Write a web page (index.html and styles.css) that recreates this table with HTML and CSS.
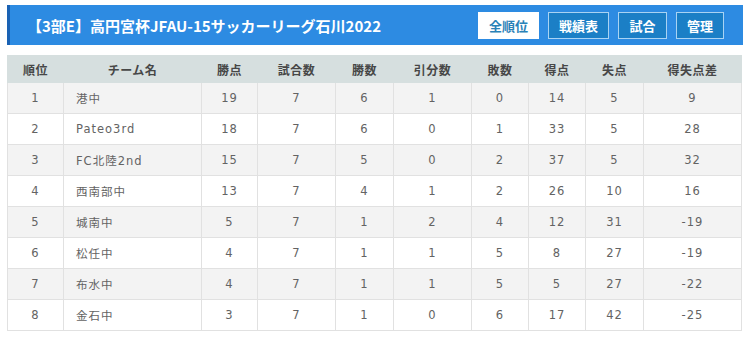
FILE: index.html
```html
<!DOCTYPE html>
<html lang="ja">
<head>
<meta charset="utf-8">
<link rel="stylesheet" href="styles.css">
</head>
<body>
<div class="page">
  <div class="titlebar">
    <h1 class="title">【3部E】高円宮杯JFAU-15サッカーリーグ石川2022</h1>
    <div class="btns">
      <span class="btn active w3">全順位</span>
      <span class="btn w3">戦績表</span>
      <span class="btn w2a">試合</span>
      <span class="btn w2b">管理</span>
    </div>
  </div>
  <table class="standings">
    <colgroup>
      <col style="width:56px"><col style="width:138px"><col style="width:56px"><col style="width:78px"><col style="width:58px"><col style="width:78px"><col style="width:57px"><col style="width:57px"><col style="width:58px"><col style="width:98px">
    </colgroup>
    <thead>
      <tr><th>順位</th><th>チーム名</th><th>勝点</th><th>試合数</th><th>勝数</th><th>引分数</th><th>敗数</th><th>得点</th><th>失点</th><th>得失点差</th></tr>
    </thead>
    <tbody>
      <tr><td>1</td><td class="team">港中</td><td>19</td><td>7</td><td>6</td><td>1</td><td>0</td><td>14</td><td>5</td><td>9</td></tr>
      <tr><td>2</td><td class="team">Pateo3rd</td><td>18</td><td>7</td><td>6</td><td>0</td><td>1</td><td>33</td><td>5</td><td>28</td></tr>
      <tr><td>3</td><td class="team">FC北陸2nd</td><td>15</td><td>7</td><td>5</td><td>0</td><td>2</td><td>37</td><td>5</td><td>32</td></tr>
      <tr><td>4</td><td class="team">西南部中</td><td>13</td><td>7</td><td>4</td><td>1</td><td>2</td><td>26</td><td>10</td><td>16</td></tr>
      <tr><td>5</td><td class="team">城南中</td><td>5</td><td>7</td><td>1</td><td>2</td><td>4</td><td>12</td><td>31</td><td>-19</td></tr>
      <tr><td>6</td><td class="team">松任中</td><td>4</td><td>7</td><td>1</td><td>1</td><td>5</td><td>8</td><td>27</td><td>-19</td></tr>
      <tr><td>7</td><td class="team">布水中</td><td>4</td><td>7</td><td>1</td><td>1</td><td>5</td><td>5</td><td>27</td><td>-22</td></tr>
      <tr><td>8</td><td class="team">金石中</td><td>3</td><td>7</td><td>1</td><td>0</td><td>6</td><td>17</td><td>42</td><td>-25</td></tr>
    </tbody>
  </table>
</div>
</body>
</html>
```
FILE: styles.css
```css
html, body {
  margin: 0;
  padding: 0;
  background: #ffffff;
}
.page {
  padding: 5px 5px 0 7px;
  font-family: "DejaVu Sans", "Noto Sans CJK JP", sans-serif;
}
.titlebar {
  height: 40px;
  box-sizing: border-box;
  background: #2d8be2;
  border-left: 3px solid #1a62b4;
  display: flex;
  align-items: center;
  justify-content: space-between;
  padding: 0 19px 0 17px;
}
.title {
  margin: 0;
  color: #ffffff;
  font-family: "Noto Sans CJK JP", sans-serif;
  font-weight: 700;
  font-size: 15px;
  letter-spacing: 0;
}
.btns {
  display: flex;
  gap: 9px;
  margin-top: 1px;
}
.btn {
  box-sizing: border-box;
  height: 27px;
  padding: 0;
  display: flex;
  align-items: center;
  justify-content: center;
  border: 1px solid #a9d3f3;
  background: #1b7fc6;
  color: #ffffff;
  font-family: "Noto Sans CJK JP", sans-serif;
  font-weight: 700;
  font-size: 13px;
}
.btn.w3 { width: 61px; }
.btn.w2a { width: 49px; }
.btn.w2b { width: 48px; }
.btn.active {
  background: #ffffff;
  border-color: #ffffff;
  color: #2a82b8;
}
.standings {
  margin-top: 10px;
  width: 734px;
  border-collapse: collapse;
  table-layout: fixed;
  font-size: 11.5px;
  letter-spacing: 1px;
  color: #636363;
}
.standings th {
  height: 27px;
  box-sizing: border-box;
  background: #d6dfdf;
  color: #474747;
  font-family: "Noto Sans CJK JP", sans-serif;
  font-weight: 700;
  font-size: 12px;
  letter-spacing: 0.5px;
  padding: 0;
  border: 1px solid #d6dfdf;
  text-align: center;
}
.standings td {
  height: 31px;
  box-sizing: border-box;
  padding: 0;
  border: 1px solid #e1e1e1;
  text-align: center;
}
.standings tbody tr:nth-child(odd) td {
  background: #f3f3f3;
}
.standings td.team {
  text-align: left;
  padding-left: 12px;
}
```
